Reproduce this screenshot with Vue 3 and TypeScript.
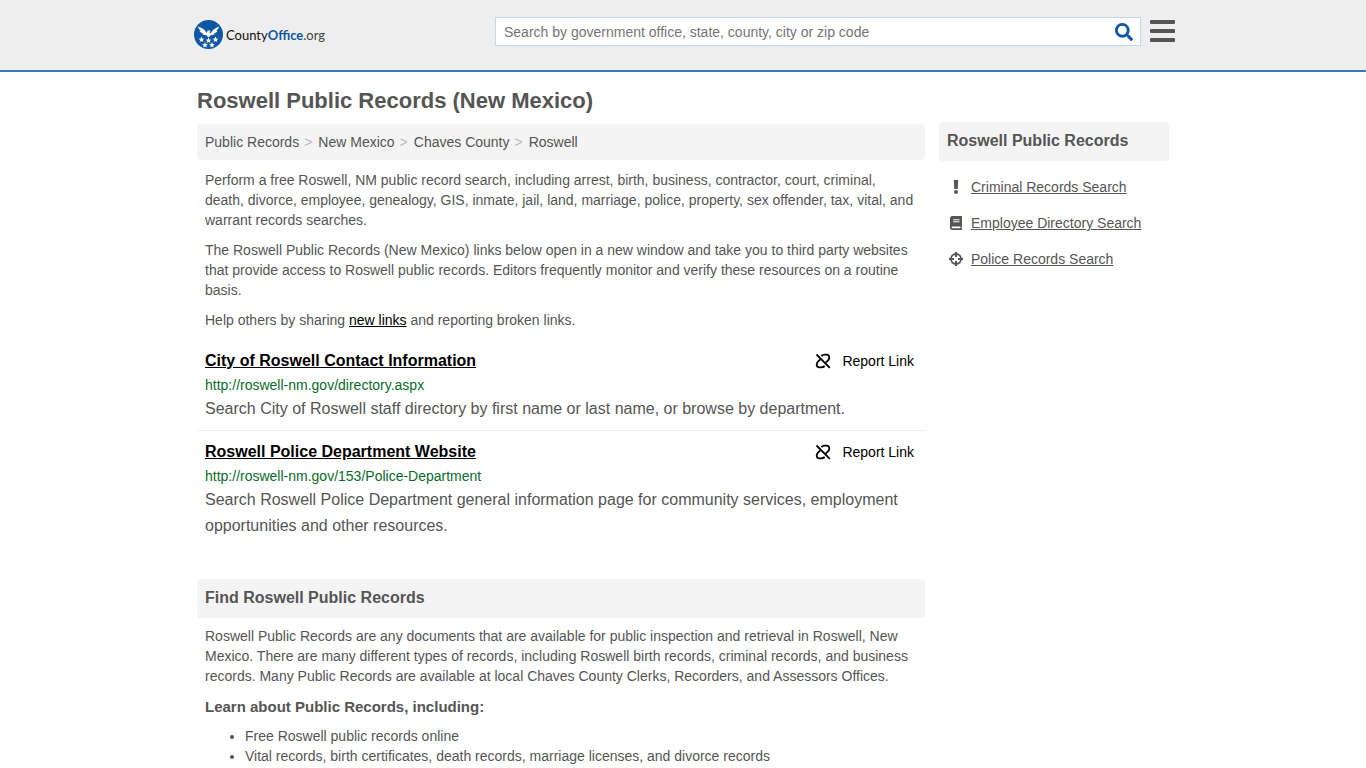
<script setup lang="ts">
import { ref } from 'vue'

interface RecordLink {
  title: string
  url: string
  description: string
}

const query = ref<string>('')

const crumbs: string[] = ['Public Records', 'New Mexico', 'Chaves County', 'Roswell']

const records: RecordLink[] = [
  {
    title: 'City of Roswell Contact Information',
    url: 'http://roswell-nm.gov/directory.aspx',
    description: 'Search City of Roswell staff directory by first name or last name, or browse by department.',
  },
  {
    title: 'Roswell Police Department Website',
    url: 'http://roswell-nm.gov/153/Police-Department',
    description:
      'Search Roswell Police Department general information page for community services, employment opportunities and other resources.',
  },
]

const topics: string[] = [
  'Free Roswell public records online',
  'Vital records, birth certificates, death records, marriage licenses, and divorce records',
]

const searches = [
  { icon: 'alert', label: 'Criminal Records Search' },
  { icon: 'book', label: 'Employee Directory Search' },
  { icon: 'target', label: 'Police Records Search' },
]
</script>

<template>
  <div class="page">
    <header class="topbar">
      <div class="topbar-inner">
        <a class="logo" href="#">
          <svg class="logo-mark" viewBox="0 0 58 58" aria-hidden="true">
            <circle cx="29" cy="29" r="29" fill="#0f56a4" />
            <g fill="#fff">
              <path d="M8 13 C15 16 21 18 26 26 L27 21 L33 21 L31 25 L33 27 C38 18 44 16 50 13 C49 18 47 20 44 21 L47 22 C45 25 43 26 40 26 L42 28 C38 30 36 30 34 30 L29 35 L24 30 C22 30 20 30 16 28 L18 26 C15 26 13 25 11 22 L14 21 C11 20 9 18 8 13 Z" />
              <path id="star" d="M15 33 l1.600 4 4.200 .3 -3.200 2.700 1 4.100 -3.600 -2.200 -3.600 2.200 1 -4.100 -3.200 -2.700 4.200 -.3z" />
              <use href="#star" x="14" y="2" />
              <use href="#star" x="28" />
              <use href="#star" x="7" y="11" />
              <use href="#star" x="21" y="11" />
            </g>
          </svg>
          <span class="logo-text">County<b>Office</b><span>.org</span></span>
        </a>
        <form class="search" role="search" @submit.prevent>
          <input
            v-model="query"
            type="text"
            aria-label="Search"
            placeholder="Search by government office, state, county, city or zip code"
          />
          <button type="submit" aria-label="Submit search">
            <svg viewBox="0 0 512 512" width="18" height="18" aria-hidden="true">
              <path fill="#0f56a4" d="M505 442.700L405.300 343c-4.500-4.500-10.600-7-17-7H372c27.600-35.300 44-79.700 44-128C416 93.100 322.900 0 208 0S0 93.100 0 208s93.100 208 208 208c48.300 0 92.700-16.400 128-44v16.300c0 6.400 2.500 12.500 7 17l99.700 99.700c9.400 9.400 24.600 9.400 33.900 0l28.300-28.300c9.400-9.400 9.400-24.600.1-34zM208 336c-70.700 0-128-57.200-128-128 0-70.700 57.200-128 128-128 70.700 0 128 57.200 128 128 0 70.700-57.200 128-128 128z" />
            </svg>
          </button>
        </form>
        <button class="menu" type="button" aria-label="Menu">
          <i></i><i></i><i></i>
        </button>
      </div>
    </header>

    <div class="container">
      <main>
        <h1>Roswell Public Records (New Mexico)</h1>
        <nav class="crumbs" aria-label="Breadcrumb">
          <template v-for="(crumb, i) in crumbs" :key="crumb">
            <span v-if="i > 0" class="sep">&gt;</span>
            <a href="#">{{ crumb }}</a>
          </template>
        </nav>

        <div class="copy">
          <p>
            Perform a free Roswell, NM public record search, including arrest, birth, business, contractor, court,
            criminal, death, divorce, employee, genealogy, GIS, inmate, jail, land, marriage, police, property, sex
            offender, tax, vital, and warrant records searches.
          </p>
          <p>
            The Roswell Public Records (New Mexico) links below open in a new window and take you to third party
            websites that provide access to Roswell public records. Editors frequently monitor and verify these
            resources on a routine basis.
          </p>
          <p>Help others by sharing <a href="#">new links</a> and reporting broken links.</p>
        </div>

        <section class="records">
          <article v-for="record in records" :key="record.url">
            <div class="record-head">
              <a class="record-title" href="#">{{ record.title }}</a>
              <button class="report" type="button">
                <svg viewBox="0 0 16 16" width="16" height="16" fill="none" stroke="#000" stroke-width="1.800" aria-hidden="true">
                  <path d="M1.500 1.500 L14.800 14.800" />
                  <path d="M6.300 3 C7.500 1.800 8.600 1.600 10 1.600 H11.500 C13.300 1.600 14.300 2.800 14.300 4.500 C14.300 6 13.600 6.900 12.600 7.800 L10.600 9.600" />
                  <path d="M9.700 13 C8.500 14.200 7.400 14.400 6 14.400 H4.500 C2.700 14.400 1.700 13.200 1.700 11.500 C1.700 10 2.400 9.100 3.400 8.200 L5.400 6.400" />
                </svg>
                Report Link
              </button>
            </div>
            <div class="record-url">{{ record.url }}</div>
            <p>{{ record.description }}</p>
          </article>
        </section>

        <h2>Find Roswell Public Records</h2>
        <div class="copy guide">
          <p>
            Roswell Public Records are any documents that are available for public inspection and retrieval in Roswell,
            New Mexico. There are many different types of records, including Roswell birth records, criminal records,
            and business records. Many Public Records are available at local Chaves County Clerks, Recorders, and
            Assessors Offices.
          </p>
          <h3>Learn about Public Records, including:</h3>
          <ul>
            <li v-for="topic in topics" :key="topic">{{ topic }}</li>
          </ul>
        </div>
      </main>

      <aside>
        <h2>Roswell Public Records</h2>
        <ul>
          <li v-for="item in searches" :key="item.label">
            <svg v-if="item.icon === 'alert'" viewBox="0 0 14 14" aria-hidden="true">
              <path d="M4.800 0 H9.200 L8.700 9 H5.300 Z" /><circle cx="7" cy="12" r="2" />
            </svg>
            <svg v-else-if="item.icon === 'book'" viewBox="0 0 14 14" aria-hidden="true">
              <path fill-rule="evenodd" d="M3.200 0 H12.400 C12.800 0 13 .2 13 .6 V10 C13 10.300 12.800 10.500 12.600 10.600 V12.300 C12.800 12.400 13 12.600 13 12.900 V13.400 C13 13.800 12.800 14 12.400 14 H3.200 C1.800 14 1 12.900 1 11.600 V2.400 C1 1 1.900 0 3.200 0 Z M4.200 3.300 V4.300 H10.500 V3.300 Z M4.200 5.300 V6.300 H10.500 V5.300 Z M3.400 10.600 C2.300 10.600 2.300 12.300 3.400 12.300 H11.300 V10.600 Z" />
            </svg>
            <svg v-else viewBox="0 0 14 14" aria-hidden="true">
              <circle cx="7" cy="7" r="5" fill="none" stroke="currentColor" stroke-width="1.800" />
              <path d="M6 0 H8 V5 H6 Z M6 9 H8 V14 H6 Z M0 6 H5 V8 H0 Z M9 6 H14 V8 H9 Z" />
            </svg>
            <a href="#">{{ item.label }}</a>
          </li>
        </ul>
      </aside>
    </div>
  </div>
</template>

<style>
body {
  margin: 0;
  background: #fff;
}
</style>

<style scoped>
.page {
  font-family: "Liberation Sans", Arial, sans-serif;
  font-size: 14px;
  line-height: 20px;
  color: #555;
}

a {
  color: inherit;
}

button {
  font: inherit;
  padding: 0;
  border: 0;
  background: none;
  cursor: pointer;
}

h1,
h2,
h3,
p,
ul {
  margin: 0;
}

.topbar {
  background: #eee;
  border-bottom: 2px solid #337ab7;
}

.topbar-inner {
  display: flex;
  align-items: flex-start;
  max-width: 981px;
  height: 70px;
  margin: 0 auto;
  padding-left: 3px;
}

.logo {
  display: flex;
  align-items: center;
  gap: 3px;
  margin-top: 20px;
  margin-right: auto;
  text-decoration: none;
  color: #111;
}

.logo-mark {
  width: 29px;
  height: 29px;
}

.logo-text {
  font-family: Lato, sans-serif;
  font-size: 13px;
}

.logo-text b {
  color: #0f56a4;
}

.logo-text span {
  color: #444;
}

.search {
  box-sizing: border-box;
  display: flex;
  flex: 0 1 646px;
  height: 29px;
  margin-top: 17px;
  background: #fff;
  border: 1px solid #c3d9ea;
}

.search input {
  flex: 1;
  min-width: 0;
  padding: 0 8px;
  border: 0;
  outline: 0;
  background: none;
  font: inherit;
  color: #555;
}

.search input::placeholder {
  color: #757575;
  opacity: 1;
}

.search button {
  display: flex;
  align-items: center;
  justify-content: center;
  width: 32px;
}

.menu {
  display: flex;
  flex-direction: column;
  gap: 5px;
  width: 25px;
  margin-top: 20px;
  margin-left: 9px;
}

.menu i {
  width: 100%;
  height: 4px;
  border-radius: 1px;
  background: #555;
}

.container {
  display: grid;
  grid-template-columns: minmax(0, 1fr) 230px;
  gap: 14px;
  max-width: 972px;
  margin: 0 auto;
}

h1 {
  padding: 17px 0 11px;
  font-size: 22px;
  line-height: 24px;
}

.crumbs {
  display: flex;
  gap: 5px;
  padding: 8px;
  border-radius: 4px;
  background: #f4f4f4;
}

.crumbs a {
  text-decoration: none;
}

.sep {
  margin-right: 1px;
  color: #bbb;
}

.copy {
  padding: 10px 8px 0;
}

.copy p {
  margin-bottom: 10px;
}

.copy a {
  color: #000;
}

.copy.guide {
  padding-top: 8px;
}

.records article {
  padding: 11px 8px 8px;
}

.records article + article {
  border-top: 1px solid #eee;
}

.record-head {
  display: flex;
  justify-content: space-between;
}

.record-title {
  font-size: 16px;
  font-weight: bold;
  color: #000;
}

.report {
  display: flex;
  align-items: center;
  gap: 11px;
  margin-right: 3px;
  color: #000;
}

.record-url {
  margin: 4px 0 1px;
  color: #0a6b2b;
}

.records p {
  font-size: 16px;
  line-height: 26px;
}

h2 {
  padding: 9px 8px 10px;
  border-radius: 4px;
  background: #f4f4f4;
  font-size: 16px;
  line-height: 20px;
}

main h2 {
  margin-top: 32px;
}

h3 {
  font-size: 15px;
  line-height: 20px;
}

.guide h3 {
  padding-top: 1px;
}

.copy ul {
  margin-top: 9px;
  padding-left: 40px;
}

aside {
  padding-top: 50px;
}

aside ul {
  display: grid;
  gap: 16px;
  padding: 16px 10px;
  list-style: none;
}

aside li {
  display: flex;
  align-items: center;
  gap: 8px;
}

aside svg {
  width: 14px;
  height: 14px;
  fill: currentColor;
}
</style>
